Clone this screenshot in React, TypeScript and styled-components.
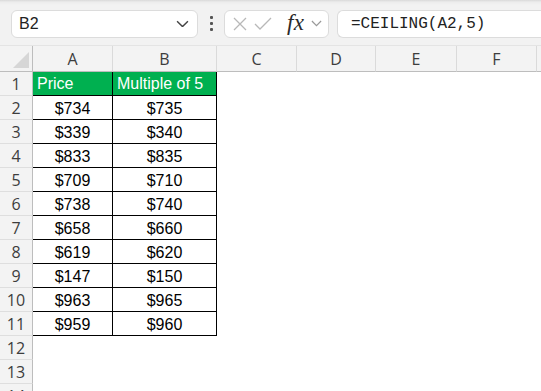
import React from 'react';
import styled, { createGlobalStyle } from 'styled-components';

const GlobalStyle = createGlobalStyle`
  html, body {
    margin: 0;
    padding: 0;
    background: #ffffff;
    overflow: hidden;
  }
`;

const Page = styled.div`
  width: 541px;
  height: 391px;
  overflow: hidden;
  background: #ffffff;
  font-family: 'Liberation Sans', Arial, sans-serif;
`;

const Toolbar = styled.div`
  height: 45px;
  box-sizing: border-box;
  background: linear-gradient(to bottom, #d9d9d9 0px, #ececec 2px, #f2f2f2 5px, #f2f2f2 100%);
  display: flex;
  align-items: center;
  padding: 2px 0 0 11px;
`;

const Box = styled.div`
  height: 28px;
  box-sizing: border-box;
  background: #ffffff;
  border: 1px solid #dcdcdc;
  border-radius: 6px;
  display: flex;
  align-items: center;
`;

const NameBox = styled(Box)`
  width: 187px;
  padding: 0 8px 0 7px;
  justify-content: space-between;
  font-size: 16px;
  color: #222;
`;

const Dots = styled.div`
  width: 26px;
  display: flex;
  flex-direction: column;
  align-items: center;
  gap: 3px;
  span {
    width: 3px;
    height: 3px;
    background: #555;
    border-radius: 1px;
  }
`;

const FxGroup = styled(Box)`
  width: 105px;
  padding: 0 6px 0 7px;
  justify-content: space-between;
`;

const Fx = styled.span`
  font-family: 'Liberation Serif', 'Times New Roman', serif;
  font-style: italic;
  font-size: 23px;
  color: #2a2a2a;
  line-height: 1;
  margin: -3px 0 0 8px;
  letter-spacing: 0.5px;
`;

const FormulaBox = styled(Box)`
  flex: 1;
  margin-left: 8px;
  border-right: none;
  border-radius: 6px 0 0 6px;
  padding-left: 13px;
  font-family: 'Liberation Mono', 'Courier New', monospace;
  font-size: 16px;
  color: #222;
`;

const Sheet = styled.div`
  display: grid;
  grid-template-columns: 33px 80px 104px 80px 79px 81px 80px 80px;
  grid-template-rows: 26px;
  grid-auto-rows: 24px;
  border-top: 1px solid #e4e4e4;
`;

const Corner = styled.div`
  background: #f3f3f3;
  border-right: 1px solid #bdbdbd;
  border-bottom: 1px solid #bdbdbd;
  box-sizing: border-box;
  position: relative;
  &::after {
    content: '';
    position: absolute;
    right: 3px;
    bottom: 3px;
    width: 0;
    height: 0;
    border-left: 16px solid transparent;
    border-bottom: 16px solid #d6d6d6;
  }
`;

const ColHead = styled.div`
  background: #f3f3f3;
  border-right: 1px solid #dadada;
  border-bottom: 1px solid #bdbdbd;
  box-sizing: border-box;
  display: flex;
  align-items: center;
  justify-content: center;
  font-family: 'Open Sans', 'Liberation Sans', sans-serif;
  font-size: 16px;
  color: #3d3d3d;
  padding-top: 1px;
`;

const RowHead = styled.div`
  background: #f3f3f3;
  border-right: 1px solid #bdbdbd;
  border-bottom: 1px solid #dedede;
  box-sizing: border-box;
  display: flex;
  align-items: center;
  justify-content: center;
  font-family: 'Open Sans', 'Liberation Sans', sans-serif;
  font-size: 16px;
  color: #3d3d3d;
  padding-top: 1px;
`;

const Cell = styled.div<{ $bordered?: boolean; $head?: boolean }>`
  box-sizing: border-box;
  border-right: ${(p) => (p.$bordered ? '1px solid #000' : 'none')};
  border-bottom: ${(p) => (p.$bordered ? '1px solid #000' : 'none')};
  background: ${(p) => (p.$head ? '#00b050' : '#ffffff')};
  color: ${(p) => (p.$head ? '#ffffff' : '#000000')};
  display: flex;
  align-items: center;
  justify-content: ${(p) => (p.$head ? 'flex-start' : 'center')};
  padding: ${(p) => (p.$head ? '1px 0 0 4px' : '2px 0 0 0')};
  font-size: 16px;
  white-space: nowrap;
  overflow: hidden;
`;

// G exists but its letter lies beyond the window edge
const columns = ['A', 'B', 'C', 'D', 'E', 'F', ''];

const data: string[][] = [
  ['Price', 'Multiple of 5'],
  ['$734', '$735'],
  ['$339', '$340'],
  ['$833', '$835'],
  ['$709', '$710'],
  ['$738', '$740'],
  ['$658', '$660'],
  ['$619', '$620'],
  ['$147', '$150'],
  ['$963', '$965'],
  ['$959', '$960'],
];

const Chevron = ({ size, color }: { size: number; color: string }) => (
  <svg width={size} height={size * 0.6} viewBox="0 0 12 7">
    <polyline points="1,1 6,6 11,1" fill="none" stroke={color} strokeWidth="1.3" />
  </svg>
);

const App: React.FC = () => {
  const rowCount = 14;
  return (
    <Page>
      <GlobalStyle />
      <Toolbar>
        <NameBox>
          <span>B2</span>
          <Chevron size={13} color="#444" />
        </NameBox>
        <Dots>
          <span />
          <span />
          <span />
        </Dots>
        <FxGroup>
          <svg width="16" height="16" viewBox="0 0 16 16">
            <path d="M2 2 L14 14 M14 2 L2 14" stroke="#b8b8b8" strokeWidth="1.3" fill="none" />
          </svg>
          <svg width="18" height="14" viewBox="0 0 18 14">
            <polyline points="1,7 6,12 17,1" stroke="#b8b8b8" strokeWidth="1.3" fill="none" />
          </svg>
          <Fx>fx</Fx>
          <Chevron size={11} color="#999" />
        </FxGroup>
        <FormulaBox>=CEILING(A2,5)</FormulaBox>
      </Toolbar>
      <Sheet>
        <Corner />
        {columns.map((c, i) => (
          <ColHead key={i}>{c}</ColHead>
        ))}
        {Array.from({ length: rowCount }, (_, r) => (
          <React.Fragment key={r}>
            <RowHead>{r + 1}</RowHead>
            {columns.map((_c, ci) => {
              const inTable = r < data.length && ci < 2;
              return (
                <Cell key={ci} $bordered={inTable} $head={inTable && r === 0}>
                  {inTable ? data[r][ci] : ''}
                </Cell>
              );
            })}
          </React.Fragment>
        ))}
      </Sheet>
    </Page>
  );
};

export default App;
